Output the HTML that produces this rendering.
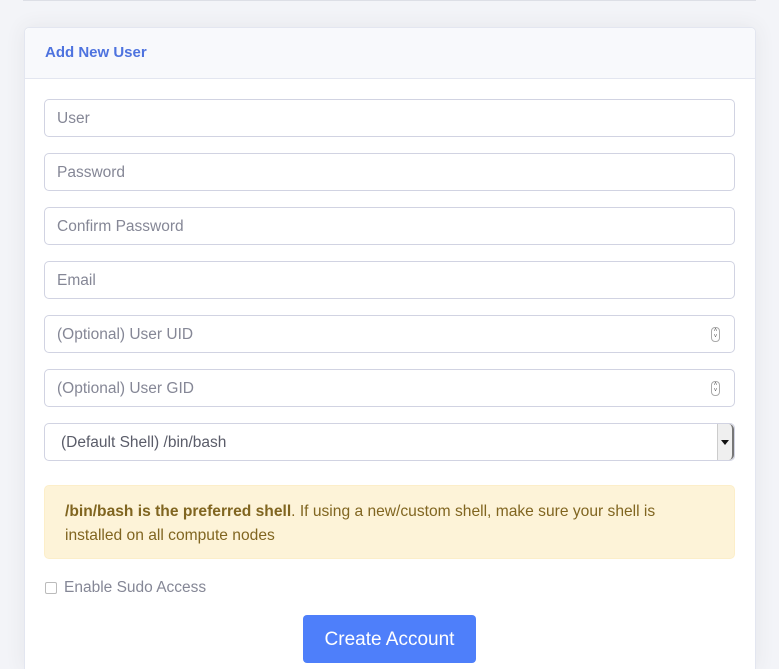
<!DOCTYPE html>
<html><head><style>
html,body{margin:0;width:779px;height:669px;overflow:hidden}
body{background:#f3f4f8;font-family:"Liberation Sans",sans-serif;position:relative}
.line{position:absolute;left:23px;top:0;width:733px;height:1px;background:#dddfe6}
.card{position:absolute;left:24px;top:27px;width:730px;height:642px;background:#fff;border:1px solid #e3e6f0;border-bottom:none;border-radius:5px 5px 0 0;box-shadow:0 0 20px rgba(58,59,69,.08)}
.hd{height:50px;background:#f8f9fc;border-bottom:1px solid #e3e6f0;border-radius:5px 5px 0 0}
.hd span{position:absolute;left:20px;top:16px;color:#4e73df;font-weight:bold;font-size:15px}
.in{position:absolute;left:19px;width:689px;height:36px;border:1px solid #d1d3e2;border-radius:5px;color:#858796;font-size:15.5px;line-height:38px;text-indent:12px;box-sizing:content-box}
.sp{position:absolute;right:14px;top:11px;width:7px;height:13px;border:1px solid #aaa;border-radius:4px;font-size:6px;line-height:6px;text-align:center;text-indent:0;color:#555}
.sel{color:#5a5c69;text-indent:16px}
.arr{position:absolute;right:0;top:0;width:14px;height:36px;background:#efefef;border-left:1px solid #ccc;border-right:2px solid #777;border-radius:0 5px 5px 0}
.arr:after{content:"";position:absolute;left:3px;top:16px;border:4px solid transparent;border-top:5px solid #111}
.alert{position:absolute;left:19px;top:457px;width:691px;height:74px;background:#fdf3d8;border:1px solid #fceec9;border-radius:5px;color:#806520;font-size:15.6px;line-height:24px;padding:14px 20px;box-sizing:border-box}
.cb{position:absolute;left:20px;top:554px;width:10px;height:10px;border:1px solid #bbb;border-radius:2px}
.cbl{position:absolute;left:39px;top:551px;color:#858796;font-size:15.5px}
.btn{position:absolute;left:278px;top:587px;width:173px;height:48px;background:#4e7ffa;border-radius:4px;color:#fff;font-size:19px;line-height:50px;text-align:center}
</style></head><body>
<div class="line"></div>
<div class="card">
<div class="hd"><span>Add New User</span></div>
<div class="in" style="top:71px">User</div>
<div class="in" style="top:125px">Password</div>
<div class="in" style="top:179px">Confirm Password</div>
<div class="in" style="top:233px">Email</div>
<div class="in" style="top:287px">(Optional) User UID<div class="sp">˄<br>˅</div></div>
<div class="in" style="top:341px">(Optional) User GID<div class="sp">˄<br>˅</div></div>
<div class="in sel" style="top:395px">(Default Shell) /bin/bash<div class="arr"></div></div>
<div class="alert"><b>/bin/bash is the preferred shell</b>. If using a new/custom shell, make sure your shell is installed on all compute nodes</div>
<div class="cb"></div><div class="cbl">Enable Sudo Access</div>
<div class="btn">Create Account</div>
</div>
</body></html>
